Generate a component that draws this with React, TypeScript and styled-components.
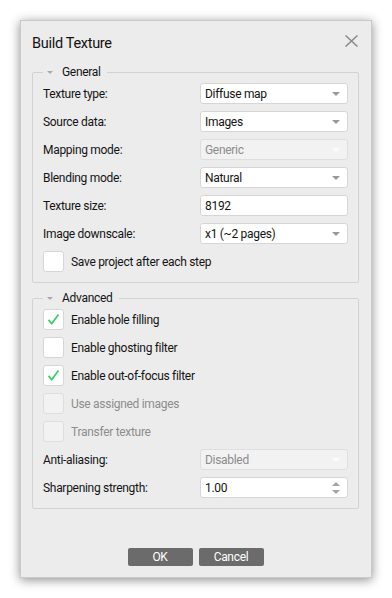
import React from 'react';
import styled, { createGlobalStyle } from 'styled-components';

const GlobalStyle = createGlobalStyle`
  html, body {
    margin: 0;
    padding: 0;
    background: #ffffff;
  }
  body {
    font-family: Roboto, "Noto Sans", sans-serif;
    font-size: 12px;
    letter-spacing: -0.3px;
    color: #141414;
  }
`

const Page = styled.div`
  padding: 20px;
  width: 352px;
`

const Dialog = styled.div`
  width: 352px;
  height: 558px;
  box-sizing: border-box;
  background: #ececec;
  border: 1px solid #c9c9c9;
  box-shadow: 0 2px 10px rgba(0, 0, 0, 0.45);
  display: flex;
  flex-direction: column;
  padding: 0 12px 11px 11px;
`

const TitleBar = styled.div`
  height: 41px;
  display: flex;
  align-items: center;
  justify-content: space-between;
  padding-top: 2px;
`

const Title = styled.h1`
  margin: 0;
  font-size: 14.5px;
  font-weight: 400;
  color: #111;
`

const CloseButton = styled.button`
  width: 14px;
  height: 14px;
  padding: 0;
  border: none;
  background: none;
  margin-right: 1px;
  margin-bottom: 6px;
  display: flex;
  align-items: center;
  justify-content: center;
`

const Group = styled.fieldset`
  margin: 0;
  padding: 3px 10px 10px 10px;
  border: 1px solid #d2d2d2;
  border-radius: 2px;
  display: flex;
  flex-direction: column;
  gap: 7px;
  & + & {
    margin-top: 7px;
  }
`

const Legend = styled.legend`
  margin-left: 0;
  padding: 0 6px 0 4px;
  display: flex;
  align-items: center;
  gap: 9px;
  line-height: 16px;
  font-size: 12px;
  color: #141414;
`

const Triangle = styled.span<{ $color?: string; $size?: number }>`
  width: 0;
  height: 0;
  border-left: ${p => p.$size ?? 3}px solid transparent;
  border-right: ${p => p.$size ?? 3}px solid transparent;
  border-top: ${p => (p.$size ?? 3)}px solid ${p => p.$color ?? '#a9a9a9'};
`

const Row = styled.div`
  display: flex;
  align-items: center;
  height: 21px;
`

const Label = styled.span<{ $disabled?: boolean }>`
  width: 157px;
  flex: none;
  color: ${p => p.$disabled ? '#8c8c8c' : '#141414'};
`

const Field = styled.div<{ $disabled?: boolean }>`
  flex: 1;
  height: 21px;
  box-sizing: border-box;
  background: ${p => p.$disabled ? '#f2f2f2' : '#ffffff'};
  border: 1px solid ${p => p.$disabled ? '#dedede' : '#d6d6d6'};
  border-radius: 3px;
  display: flex;
  align-items: center;
  justify-content: space-between;
  padding: 0 4px 0 4px;
  color: ${p => p.$disabled ? '#8c8c8c' : '#141414'};
`

const ArrowBox = styled.span`
  width: 14px;
  display: flex;
  justify-content: center;
`

const SpinArrows = styled.span`
  width: 14px;
  display: flex;
  flex-direction: column;
  align-items: center;
  gap: 4px;
`

const UpTriangle = styled.span`
  width: 0;
  height: 0;
  border-left: 4px solid transparent;
  border-right: 4px solid transparent;
  border-bottom: 4px solid #a3a3a3;
`

const CheckRow = styled.label<{ $disabled?: boolean }>`
  display: flex;
  align-items: center;
  gap: 7px;
  height: 21px;
  color: ${p => p.$disabled ? '#8c8c8c' : '#141414'};
`

const Box = styled.span<{ $disabled?: boolean }>`
  width: 21px;
  height: 21px;
  box-sizing: border-box;
  flex: none;
  background: ${p => p.$disabled ? '#f2f2f2' : '#ffffff'};
  border: 1px solid ${p => p.$disabled ? '#dedede' : '#d6d6d6'};
  border-radius: 3px;
  display: flex;
  align-items: center;
  justify-content: center;
`

const Footer = styled.div`
  margin-top: auto;
  display: flex;
  justify-content: center;
  gap: 6px;
`

const Button = styled.button`
  width: 65px;
  height: 18px;
  padding: 0;
  border: none;
  border-radius: 2px;
  background: #6b6b6b;
  color: #ffffff;
  font-family: inherit;
  font-size: 12px;
  letter-spacing: inherit;
  line-height: 18px;
`

type ComboProps = { value: string; disabled?: boolean }

function Combo({ value, disabled }: ComboProps) {
  return (
    <Field $disabled={disabled}>
      <span>{value}</span>
      <ArrowBox>
        <Triangle $size={4} $color={disabled ? '#fbfbfb' : '#9a9a9a'} />
      </ArrowBox>
    </Field>
  );
}

type CheckProps = { label: string; checked?: boolean; disabled?: boolean }

function Check({ label, checked, disabled }: CheckProps) {
  return (
    <CheckRow $disabled={disabled}>
      <Box $disabled={disabled}>
        {checked && (
          <svg width="13" height="13" viewBox="0 0 13 13">
            <path d="M1.5 6.8 L4.8 10.5 L11.5 1.5" fill="none" stroke="#3fce6b" strokeWidth="1.8" />
          </svg>
        )}
      </Box>
      {label}
    </CheckRow>
  );
}

export default function App() {
  return (
    <Page>
      <GlobalStyle />
      <Dialog>
        <TitleBar>
          <Title>Build Texture</Title>
          <CloseButton aria-label="close">
            <svg width="13" height="12" viewBox="0 0 13 12">
              <path d="M0.5 0.5 L12.5 11.5 M12.5 0.5 L0.5 11.5" stroke="#8a8a8a" strokeWidth="1.5" />
            </svg>
          </CloseButton>
        </TitleBar>

        <Group>
          <Legend><Triangle />General</Legend>
          <Row><Label>Texture type:</Label><Combo value="Diffuse map" /></Row>
          <Row><Label>Source data:</Label><Combo value="Images" /></Row>
          <Row><Label>Mapping mode:</Label><Combo value="Generic" disabled /></Row>
          <Row><Label>Blending mode:</Label><Combo value="Natural" /></Row>
          <Row><Label>Texture size:</Label><Field>8192</Field></Row>
          <Row><Label>Image downscale:</Label><Combo value="x1 (~2 pages)" /></Row>
          <Check label="Save project after each step" />
        </Group>

        <Group>
          <Legend><Triangle />Advanced</Legend>
          <Check label="Enable hole filling" checked />
          <Check label="Enable ghosting filter" />
          <Check label="Enable out-of-focus filter" checked />
          <Check label="Use assigned images" disabled />
          <Check label="Transfer texture" disabled />
          <Row><Label>Anti-aliasing:</Label><Combo value="Disabled" disabled /></Row>
          <Row>
            <Label>Sharpening strength:</Label>
            <Field>
              <span>1.00</span>
              <SpinArrows><UpTriangle /><Triangle $size={4} $color="#a3a3a3" /></SpinArrows>
            </Field>
          </Row>
        </Group>

        <Footer>
          <Button>OK</Button>
          <Button>Cancel</Button>
        </Footer>
      </Dialog>
    </Page>
  );
}
